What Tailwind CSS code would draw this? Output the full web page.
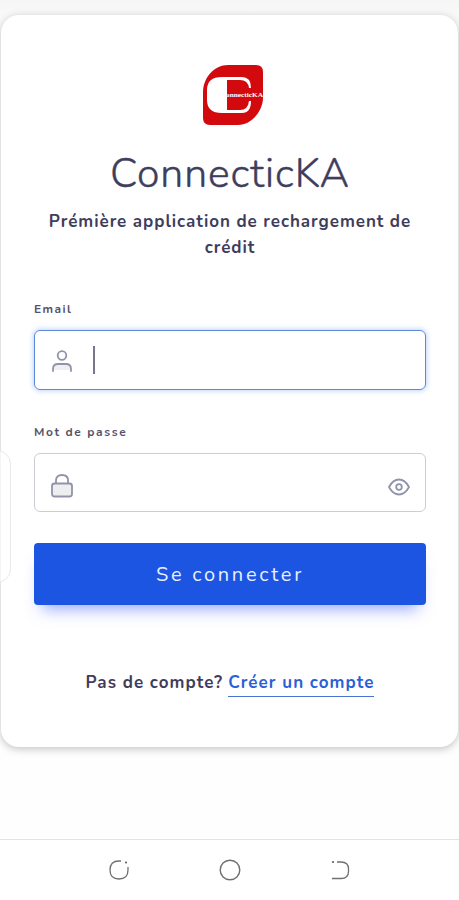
<!-- Login Page -->
<!DOCTYPE html>
<html lang="fr">
  <head>
    <meta charset="UTF-8" />
    <meta name="viewport" content="width=device-width, initial-scale=1.0" />
    <script src="https://cdn.jsdelivr.net/npm/@tailwindcss/browser@4"></script>
    <title>ConnecticKA</title>
  </head>
  <body
    class="bg-white h-[900px] flex flex-col overflow-hidden font-['Nunito','Lato',sans-serif] text-[#3f3d5c]"
  >
    <main
      class="relative h-[839px] shrink-0 px-px pt-[15px] bg-linear-to-b from-[#f6f6f7] to-[#fefefe] to-5% overflow-hidden"
    >
      <!-- Login card -->
      <div
        class="h-[732px] bg-white rounded-[18px] pl-[33px] pr-8 flex flex-col shadow-[0_2px_9px_rgba(0,0,0,0.24)]"
      >
        <!-- Logo -->
        <svg class="w-[62px] h-[62px] mt-[49px] ml-[168px] shrink-0" viewBox="0 0 62 62">
          <path
            d="M26 1H54Q61 1 61 8V34C61 46 50 61 36 61H8Q1 61 1 54V28C1 14 12 1 26 1Z"
            fill="#d20a0d"
          />
          <path
            d="M24 13H40Q49 13 49 24H47Q46 16 38 16H25V46H38Q46 46 47 37H49Q49 49 40 49H20Q5 49 5 36V26Q5 13 20 13Z"
            fill="#fff"
          />
          <text
            x="24"
            y="33"
            textLength="37"
            lengthAdjust="spacingAndGlyphs"
            font-family="Liberation Serif"
            font-weight="bold"
            font-size="6"
            fill="#fff"
          >
            onnecticKA
          </text>
        </svg>

        <h1
          class="mt-[23px] h-[50px] leading-[50px] text-center text-[41px] font-light whitespace-nowrap tracking-[0.9px] [-webkit-text-stroke:0.4px_#3f3d5c]"
        >
          ConnecticKA
        </h1>
        <p
          class="mt-[10px] text-center text-[17px] leading-[26px] font-bold tracking-[0.95px] whitespace-nowrap"
        >
          Prémière application de rechargement de<br />crédit
        </p>

        <!-- Email -->
        <label for="email" class="mt-[40px] h-4 leading-4 text-xs font-bold tracking-[1.4px] text-[#55536b]"
          >Email</label
        >
        <div
          id="email"
          class="mt-[13px] h-[60px] shrink-0 rounded-md border-[1.5px] border-[#5e87d6] shadow-[0_0_5px_1px_rgba(90,150,250,0.4)] flex items-center"
        >
          <svg
            class="w-[22px] h-[24px] ml-4 mt-[2px]"
            viewBox="0 0 22 24"
            fill="none"
            stroke="#9293ab"
            stroke-width="1.8"
            stroke-linecap="round"
          >
            <path d="M3 21V19Q3 15 7 15H15Q19 15 19 19V21Z" fill="#f0f0f3" stroke="none" />
            <circle cx="11" cy="6.5" r="4.3" />
            <path d="M2 22V20Q2 15 7 15H15Q20 15 20 20V22" />
          </svg>
          <span class="w-[1.5px] h-7 ml-[20px] bg-[#77778a]"></span>
        </div>

        <!-- Password -->
        <label for="password" class="mt-[34px] h-4 leading-4 text-xs font-bold tracking-[1.6px] text-[#55536b]"
          >Mot de passe</label
        >
        <div
          id="password"
          class="mt-[13px] h-[59px] shrink-0 rounded-md border-[1.5px] border-[#cdcdd4] flex items-center justify-between"
        >
          <svg
            class="w-[22px] h-[24px] ml-4 mt-[7px]"
            viewBox="0 0 22 24"
            fill="none"
            stroke="#9293ab"
            stroke-width="1.8"
          >
            <rect x="1" y="9.5" width="20" height="13" rx="2.5" fill="#eeeef1" />
            <path d="M5 9.5V6.5Q5 1 11 1T17 6.5V9.5" />
          </svg>
          <svg
            class="w-[22px] h-[18px] mr-[15px] mt-[9px]"
            viewBox="0 0 22 18"
            fill="none"
            stroke="#9293ab"
            stroke-width="1.8"
          >
            <path d="M1 9Q5 1.5 11 1.5T21 9Q17 16.5 11 16.5T1 9Z" />
            <circle cx="11" cy="9" r="2.8" />
          </svg>
        </div>

        <button
          class="mt-[31px] h-[62px] shrink-0 rounded bg-[#1d55e3] text-[#e9efff] text-xl pt-[2px] tracking-[2.7px] shadow-[0_12px_16px_-8px_rgba(50,80,255,0.5)]"
        >
          Se connecter
        </button>

        <p
          class="mt-[66px] flex justify-center gap-[5px] text-[17px] leading-6 font-bold tracking-[1.05px] whitespace-nowrap"
        >
          <span>Pas de compte?</span>
          <a class="h-[26px] text-[#2b60d5] border-b-[1.5px] border-[#4a75cf]">Créer un compte</a>
        </p>
      </div>

      <!-- Edge panel handle -->
      <div
        class="absolute -left-5 top-[450px] w-[31px] h-[133px] rounded-[14px] border-[1.5px] border-[#e9e9eb] bg-white/60"
      ></div>
    </main>

    <!-- Navigation bar -->
    <nav
      class="h-[61px] border-t-[1.5px] border-[#e3e3e4] bg-white flex justify-between px-[108px] pt-[19px]"
    >
      <svg class="w-[22px] h-[22px]" viewBox="0 0 22 22" fill="none" stroke="#707070" stroke-width="1.3">
        <path d="M13 2H11C5 2 2 5 2 11S5 20 11 20S20 17 20 11V8" />
        <circle cx="18" cy="3.5" r="1" fill="#555" stroke="none" />
      </svg>
      <svg class="w-[22px] h-[22px]" viewBox="0 0 22 22" fill="none" stroke="#707070" stroke-width="1.4">
        <circle cx="11" cy="11" r="9.8" />
      </svg>
      <svg class="w-[22px] h-[22px]" viewBox="0 0 22 22" fill="none" stroke="#707070" stroke-width="1.3">
        <path d="M8 3H12Q19.5 3 19.5 10V12.5Q19.5 19.5 12 19.5H3" />
        <circle cx="4" cy="3" r="1" fill="#555" stroke="none" />
      </svg>
    </nav>
  </body>
</html>
